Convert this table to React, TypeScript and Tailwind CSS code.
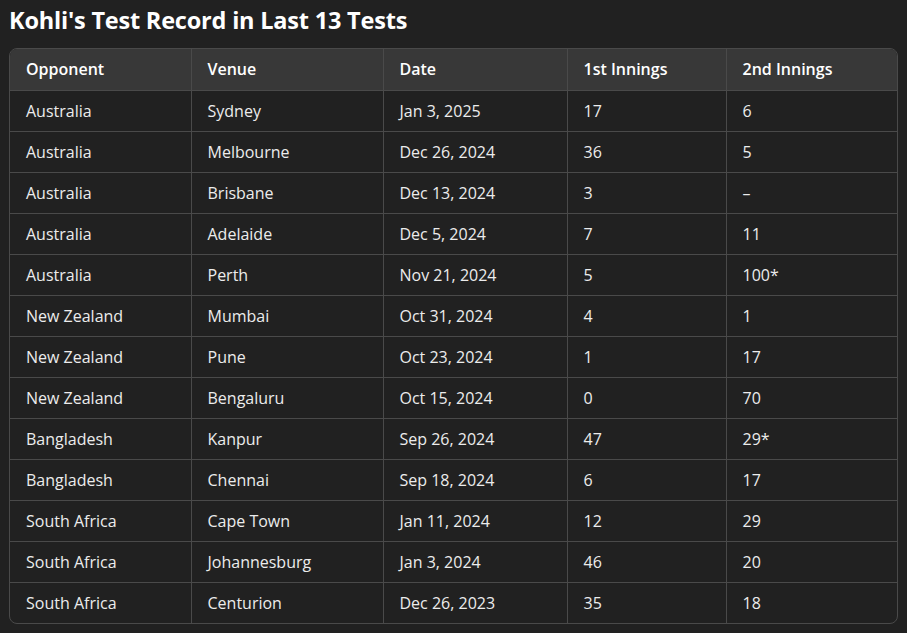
import React from "react";

const rows: string[][] = [
  ["Australia", "Sydney", "Jan 3, 2025", "17", "6"],
  ["Australia", "Melbourne", "Dec 26, 2024", "36", "5"],
  ["Australia", "Brisbane", "Dec 13, 2024", "3", "–"],
  ["Australia", "Adelaide", "Dec 5, 2024", "7", "11"],
  ["Australia", "Perth", "Nov 21, 2024", "5", "100*"],
  ["New Zealand", "Mumbai", "Oct 31, 2024", "4", "1"],
  ["New Zealand", "Pune", "Oct 23, 2024", "1", "17"],
  ["New Zealand", "Bengaluru", "Oct 15, 2024", "0", "70"],
  ["Bangladesh", "Kanpur", "Sep 26, 2024", "47", "29*"],
  ["Bangladesh", "Chennai", "Sep 18, 2024", "6", "17"],
  ["South Africa", "Cape Town", "Jan 11, 2024", "12", "29"],
  ["South Africa", "Johannesburg", "Jan 3, 2024", "46", "20"],
  ["South Africa", "Centurion", "Dec 26, 2023", "35", "18"],
];

const headers = ["Opponent", "Venue", "Date", "1st Innings", "2nd Innings"];
const widths = ["w-[181px]", "w-[192px]", "w-[184px]", "w-[159px]", "w-[172px]"];

export default function App() {
  return (
    <div className="min-h-screen bg-[#212121] px-[9px] pt-[4px] text-[#ececec] [font-family:'Open_Sans','Noto_Sans',sans-serif]">
      <h1 className="text-[23.5px] font-bold leading-[32px] text-white tracking-[-0.2px]">
        Kohli's Test Record in Last 13 Tests
      </h1>
      <div className="mt-[12px] w-[889px] overflow-hidden rounded-lg border border-[#4a4a4a]">
        <table className="w-full table-fixed border-collapse text-[16px]">
          <thead>
            <tr className="h-[41px] bg-[#383838]">
              {headers.map((h, i) => (
                <th
                  key={h}
                  className={`${widths[i]} border-l border-[#4a4a4a] px-4 text-left font-semibold text-white first:border-l-0`}
                >
                  {h}
                </th>
              ))}
            </tr>
          </thead>
          <tbody>
            {rows.map((r, ri) => (
              <tr key={ri} className="h-[41px] border-t border-[#4a4a4a]">
                {r.map((c, ci) => (
                  <td key={ci} className="border-l border-[#4a4a4a] px-4 first:border-l-0">
                    {c}
                  </td>
                ))}
              </tr>
            ))}
          </tbody>
        </table>
      </div>
    </div>
  );
}
